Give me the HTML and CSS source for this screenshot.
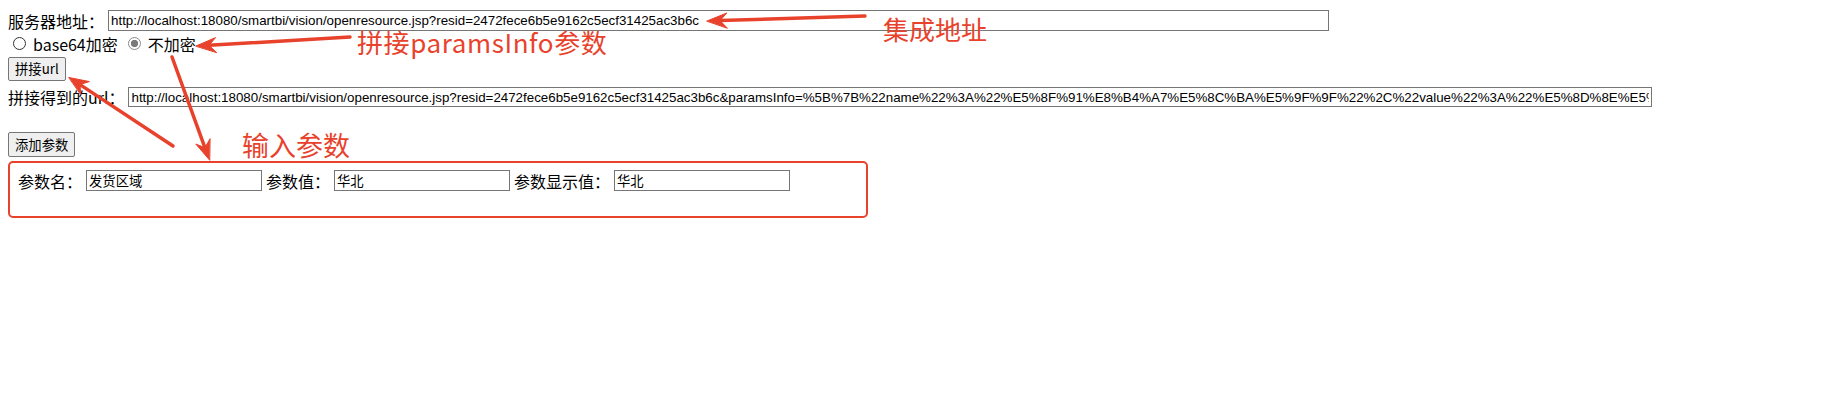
FILE: index.html
```html
<!DOCTYPE html>
<html lang="zh-CN">
<head>
<meta charset="utf-8">
<title>集成地址</title>
<link rel="stylesheet" href="styles.css">
</head>
<body>
  <div class="row row-server">
    <span class="label">服务器地址：</span>
    <input class="field field-server" type="text" value="http://localhost:18080/smartbi/vision/openresource.jsp?resid=2472fece6b5e9162c5ecf31425ac3b6c">
  </div>
  <div class="row row-radio">
    <input class="radio radio-first" type="radio" name="enc">
    <span class="label opt-text">base64加密</span>
    <input class="radio radio-second" type="radio" name="enc" checked>
    <span class="label opt-text">不加密</span>
  </div>
  <div class="row row-btn">
    <button class="btn" type="button">拼接url</button>
  </div>
  <div class="row row-result">
    <span class="label">拼接得到的url：</span>
    <input class="field field-result" type="text" value="http://localhost:18080/smartbi/vision/openresource.jsp?resid=2472fece6b5e9162c5ecf31425ac3b6c&amp;paramsInfo=%5B%7B%22name%22%3A%22%E5%8F%91%E8%B4%A7%E5%8C%BA%E5%9F%9F%22%2C%22value%22%3A%22%E5%8D%8E%E5%8C%97%22%2C%22displayValue%22%3A%22%E5%8D%8E%E5%8C%97%22%7D%5D">
  </div>
  <div class="row row-add">
    <button class="btn" type="button">添加参数</button>
  </div>
  <div class="params">
    <div class="param-row">
      <span class="label">参数名：</span>
      <input class="field field-param" type="text" value="发货区域">
      <span class="label">参数值：</span>
      <input class="field field-param" type="text" value="华北">
      <span class="label">参数显示值：</span>
      <input class="field field-param" type="text" value="华北">
    </div>
  </div>

  <svg class="notes-svg" width="1843" height="393" viewBox="0 0 1843 393" aria-hidden="true">
    <g fill="#e8422c" stroke="#e8422c" stroke-linecap="round">
      <line x1="865" y1="16" x2="720" y2="20.6" stroke-width="3.5"/>
      <polygon points="707,21 726.8,13 720,20.6 727.2,28" stroke-width="1" stroke-linejoin="round"/>

      <line x1="350" y1="37" x2="209" y2="45.3" stroke-width="3.5"/>
      <polygon points="196,46 215.6,37.6 209,45.3 216.4,52.4" stroke-width="1" stroke-linejoin="round"/>

      <line x1="172" y1="57" x2="204.9" y2="147.7" stroke-width="3.5"/>
      <polygon points="209.5,160 195.8,144 204.9,147.7 209.9,139" stroke-width="1" stroke-linejoin="round"/>

      <line x1="173" y1="146" x2="80" y2="84.6" stroke-width="3.5"/>
      <polygon points="69,77.5 89.4,81.6 80,84.6 80.7,94.3" stroke-width="1" stroke-linejoin="round"/>
    </g>
  </svg>
  <span class="note note-addr">集成地址</span>
  <span class="note note-params">拼接paramsInfo参数</span>
  <span class="note note-input">输入参数</span>
</body>
</html>
```

FILE: styles.css
```css
html, body {
  margin: 0;
  padding: 0;
  background: #ffffff;
}

body {
  padding: 8px;
  width: 1827px;
  color: #000000;
  font-family: "Noto Sans CJK SC", "Noto Sans", sans-serif;
  font-size: 16px;
}

.row {
  display: flex;
  align-items: center;
}

.label {
  font-size: 16px;
  line-height: 20px;
  white-space: nowrap;
}

.row-server {
  height: 25px;
  gap: 4px;
}

.row-radio {
  height: 21px;
}

.row-btn {
  margin-top: 3px;
  height: 24px;
}

.row-result {
  height: 32px;
  gap: 4px;
}

.row-add {
  margin-top: 19px;
  height: 25px;
}

.field {
  box-sizing: border-box;
  height: 21px;
  border: 1px solid #767676;
  border-radius: 0;
  padding: 1px 2px;
  margin: 0;
  background: #ffffff;
  color: #000000;
  font-family: "Liberation Sans", Arial, "Noto Sans CJK SC", sans-serif;
  font-size: 13.33px;
  outline: none;
}

.field-server {
  width: 1221px;
}

.field-result {
  width: 1524px;
  height: 20px;
}

.field-param {
  width: 176px;
  font-family: "Noto Sans CJK SC", sans-serif;
}

.radio {
  appearance: none;
  -webkit-appearance: none;
  box-sizing: border-box;
  width: 13px;
  height: 13px;
  margin: 0;
  border: 1px solid #333333;
  border-radius: 50%;
  background: #ffffff;
  flex: none;
}

.radio:checked {
  border-color: #8a8a8a;
  background: radial-gradient(circle, #7b7b7b 0 3.4px, #ffffff 3.9px);
}

.radio-first {
  margin-left: 5px;
}

.radio-second {
  margin-left: 10px;
}

.opt-text {
  margin-left: 7px;
}

.btn {
  box-sizing: border-box;
  height: 100%;
  margin: 0;
  padding: 0 6px;
  border: 1px solid #767676;
  border-radius: 2px;
  background: #efefef;
  color: #000000;
  font-family: "Noto Sans CJK SC", sans-serif;
  font-size: 13.33px;
  line-height: 1;
}

.params {
  box-sizing: border-box;
  margin-top: 4px;
  width: 860px;
  height: 57px;
  border: 2px solid #e8422c;
  border-radius: 5px;
  padding: 7px 8px 0;
}

.param-row {
  display: flex;
  align-items: center;
  gap: 4px;
  height: 21px;
}

.notes-svg {
  position: absolute;
  left: 0;
  top: 0;
  pointer-events: none;
}

.note {
  position: absolute;
  color: #e8422c;
  font-family: "Noto Sans CJK SC", sans-serif;
  font-size: 26px;
  line-height: 1;
  white-space: nowrap;
  pointer-events: none;
}

.note-addr {
  left: 883px;
  top: 16px;
}

.note-params {
  left: 357px;
  top: 29px;
  letter-spacing: 0.6px;
}

.note-input {
  left: 242px;
  top: 131px;
  font-size: 27px;
}
```
